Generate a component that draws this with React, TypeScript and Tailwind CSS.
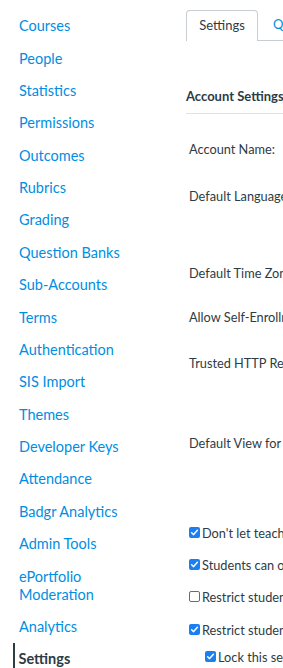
const navItems = [
  'Courses',
  'People',
  'Statistics',
  'Permissions',
  'Outcomes',
  'Rubrics',
  'Grading',
  'Question Banks',
  'Sub-Accounts',
  'Terms',
  'Authentication',
  'SIS Import',
  'Themes',
  'Developer Keys',
  'Attendance',
  'Badgr Analytics',
  'Admin Tools',
  'ePortfolio Moderation',
  'Analytics',
]

const fieldRows = [
  { label: 'Account Name:', h: 'h-[47px]' },
  { label: 'Default Language:', h: 'h-[77px]' },
  { label: 'Default Time Zone:', h: 'h-[44px]' },
  { label: 'Allow Self-Enrollment:', h: 'h-[46px]' },
  { label: 'Trusted HTTP Referers:', h: 'h-[80px]' },
  { label: 'Default View for Courses:', h: 'h-[90px]' },
]

function Checkbox({ checked }: { checked: boolean }) {
  if (!checked) {
    return <span className="mt-[2.6px] h-[11px] w-[11px] shrink-0 rounded-[2px] border border-[#6b6b6b] bg-white" />
  }
  return (
    <span className="mt-[2.6px] flex h-[11px] w-[11px] shrink-0 items-center justify-center rounded-[2px] bg-[#1a7ff2]">
      <svg viewBox="0 0 12 12" className="h-[9px] w-[9px]">
        <path d="M2.2 6.3 4.8 8.8 9.9 3" fill="none" stroke="white" strokeWidth="2" strokeLinecap="round" strokeLinejoin="round" />
      </svg>
    </span>
  )
}

function CheckRow({ checked, text, className }: { checked: boolean; text: string; className: string }) {
  return (
    <div className={`flex items-start gap-[2px] ${className}`}>
      <Checkbox checked={checked} />
      <span className="leading-[18px]">{text}</span>
    </div>
  )
}

export default function App() {
  return (
    <div
      className="flex h-[668px] w-[283px] overflow-hidden bg-white text-[#2d3b45]"
      style={{ fontFamily: 'Lato, "Noto Sans", sans-serif' }}
    >
      <nav className="w-[186px] shrink-0 pl-[13px] pt-[10px]">
        <ul>
          {navItems.map((item) => (
            <li key={item} className="border-l-2 border-transparent pl-[4px] pr-2 py-[7.2px]">
              <a className="block w-[110px] text-[14.5px] leading-[18px] text-[#008ee2]">{item}</a>
            </li>
          ))}
          <li className="border-l-[2.5px] border-[#2d3b45] pl-[3.5px] py-[7.2px]">
            <span className="block text-[14.5px] font-bold leading-[18px]">Settings</span>
          </li>
        </ul>
      </nav>

      <main className="flex min-w-[400px] flex-col whitespace-nowrap pt-[10px] text-[12.75px]">
        <div className="flex h-[33px] items-stretch">
          <div className="flex w-[72px] items-center justify-center rounded-t-[4px] border border-b-0 border-[#c7cdd1] text-[13px]">
            Settings
          </div>
          <div className="flex flex-1 items-center border-b border-[#c7cdd1] pl-[15px] text-[13px] text-[#008ee2]">
            Quotas
          </div>
        </div>

        <h2 className="mt-[46px] text-[13px] font-bold leading-[18px]">Account Settings</h2>
        <div className="mt-[8px] border-t border-[#dfe3e6]" />

        <div className="mt-[26px] flex flex-col pl-[3px]">
          {fieldRows.map((row) => (
            <div key={row.label} className={`${row.h} leading-[18px]`}>
              {row.label}
            </div>
          ))}
          <CheckRow checked className="h-[32px]" text="Don't let teachers rename their courses" />
          <CheckRow checked className="h-[32px]" text="Students can opt-in to receiving scores" />
          <CheckRow checked={false} className="h-[33px]" text="Restrict students from viewing courses" />
          <CheckRow checked className="h-[27px]" text="Restrict students from viewing future courses" />
          <CheckRow checked className="ml-[16px] h-[20px]" text="Lock this setting for sub-accounts" />
        </div>
      </main>
    </div>
  )
}
